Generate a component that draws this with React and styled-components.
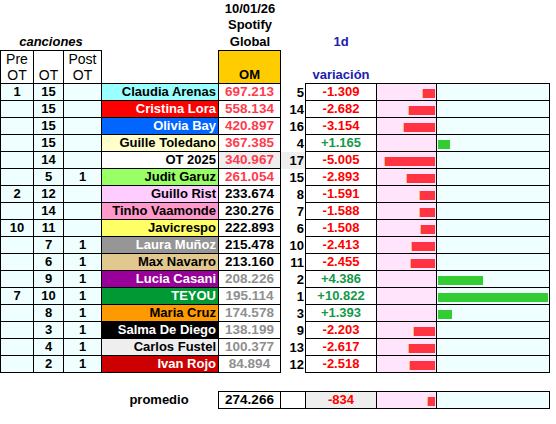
import React from 'react'
import styled, { createGlobalStyle } from 'styled-components'

const COLS = '34px 30px 38px 117px 62px 24px 72px 60px 113px'
const line = '1px solid #000'
const SCALE = 10.15 / 1000

const Global = createGlobalStyle`
  body {
    margin: 0;
    background: #fff;
  }
  * {
    box-sizing: border-box;
  }
`

const Sheet = styled.div`
  width: 556px;
  height: 424px;
  font-family: "Liberation Sans", Arial, sans-serif;
  font-weight: bold;
  font-size: 13px;
  color: #000;
`

const Row = styled.div`
  display: grid;
  grid-template-columns: ${COLS};
  height: ${p => p.$h}px;
  margin-top: ${p => p.$mt || 0}px;
`

const Cell = styled.div`
  display: flex;
  align-items: center;
  justify-content: ${p => p.$align || 'center'};
  background: ${p => p.$bg || 'transparent'};
  color: ${p => p.$color || '#000'};
  border-top: ${p => (p.$t ? line : 'none')};
  border-right: ${p => (p.$r ? line : 'none')};
  border-bottom: ${p => (p.$b ? line : 'none')};
  border-left: ${p => (p.$l ? line : 'none')};
  line-height: 16px;
  white-space: nowrap;
  overflow: hidden;
`

const Caption = styled.div`
  grid-column: ${p => p.$col};
  align-self: end;
  text-align: center;
  line-height: 16.5px;
  font-style: ${p => (p.$italic ? 'italic' : 'normal')};
  color: ${p => p.$color || '#000'};
`

const HeadCell = styled(Cell)`
  flex-direction: column;
  justify-content: flex-end;
  align-items: center;
  text-align: center;
  font-weight: ${p => (p.$plain ? 'normal' : 'bold')};
  font-size: ${p => (p.$plain ? '14px' : '13px')};
`

const NameCell = styled(Cell)`
  padding-right: 2px;
  font-size: 13px;
`

const OmValue = styled(Cell)`
  font-size: 13.5px;
`

const RankCell = styled(Cell)`
  padding-right: 1px;
`

const BarCell = styled(Cell)`
  align-items: flex-start;
  padding-top: 5px;
  padding-${p => (p.$neg ? 'right' : 'left')}: 1px;
`

const Bar = styled.div`
  height: 9px;
  background: ${p => (p.$neg ? '#ff3342' : '#33cc33')};
  box-shadow: ${p => (p.$neg ? 'inset 1px 0 #f4c06a' : 'none')};
`

const CYAN = '#efffff'
const PINK = '#ffe4fb'
const GREY = '#eeeeee'
const RED = '#ff0000'
const GREEN = '#14994a'
const OM_COLORS = { hot: '#ff3b4e', dark: '#000', faded: '#8f8f8f' }

const data = [
  { pre: '1', ot: '15', post: '', name: 'Claudia Arenas', bg: '#99ffff', fg: '#000', om: '697.213', tone: 'hot', rank: 5, v: -1309 },
  { pre: '', ot: '15', post: '', name: 'Cristina Lora', bg: '#ff0000', fg: '#fff', om: '558.134', tone: 'hot', rank: 14, v: -2682 },
  { pre: '', ot: '15', post: '', name: 'Olivia Bay', bg: '#0066ff', fg: '#fff', om: '420.897', tone: 'hot', rank: 16, v: -3154 },
  { pre: '', ot: '15', post: '', name: 'Guille Toledano', bg: '#ffffcc', fg: '#000', om: '367.385', tone: 'hot', rank: 4, v: 1165 },
  { pre: '', ot: '14', post: '', name: 'OT 2025', bg: '#ffffff', fg: '#000', om: '340.967', tone: 'hot', rank: 17, v: -5005, shade: true },
  { pre: '', ot: '5', post: '1', name: 'Judit Garuz', bg: '#99ff66', fg: '#000', om: '261.054', tone: 'hot', rank: 15, v: -2893 },
  { pre: '2', ot: '12', post: '', name: 'Guillo Rist', bg: '#ffccff', fg: '#000', om: '233.674', tone: 'dark', rank: 8, v: -1591 },
  { pre: '', ot: '14', post: '', name: 'Tinho Vaamonde', bg: '#ff99cc', fg: '#000', om: '230.276', tone: 'dark', rank: 7, v: -1588 },
  { pre: '10', ot: '11', post: '', name: 'Javicrespo', bg: '#ffff66', fg: '#000', om: '222.893', tone: 'dark', rank: 6, v: -1508 },
  { pre: '', ot: '7', post: '1', name: 'Laura Muñoz', bg: '#969696', fg: '#fff', om: '215.478', tone: 'dark', rank: 10, v: -2413 },
  { pre: '', ot: '6', post: '1', name: 'Max Navarro', bg: '#e0c88e', fg: '#000', om: '213.160', tone: 'dark', rank: 11, v: -2455 },
  { pre: '', ot: '9', post: '1', name: 'Lucia Casani', bg: '#990099', fg: '#fff', om: '208.226', tone: 'faded', rank: 2, v: 4386 },
  { pre: '7', ot: '10', post: '1', name: 'TEYOU', bg: '#009933', fg: '#fff', om: '195.114', tone: 'faded', rank: 1, v: 10822 },
  { pre: '', ot: '8', post: '1', name: 'Maria Cruz', bg: '#ff9900', fg: '#000', om: '174.578', tone: 'faded', rank: 3, v: 1393 },
  { pre: '', ot: '3', post: '1', name: 'Salma De Diego', bg: '#000000', fg: '#fff', om: '138.199', tone: 'faded', rank: 9, v: -2203 },
  { pre: '', ot: '4', post: '1', name: 'Carlos Fustel', bg: '#eeeeee', fg: '#000', om: '100.377', tone: 'faded', rank: 13, v: -2617 },
  { pre: '', ot: '2', post: '1', name: 'Ivan Rojo', bg: '#cc0000', fg: '#fff', om: '84.894', tone: 'faded', rank: 12, v: -2518 },
]

const fmt = v => {
  const abs = Math.abs(v)
  const s = abs >= 1000 ? `${Math.floor(abs / 1000)}.${String(abs % 1000).padStart(3, '0')}` : String(abs)
  return (v < 0 ? '-' : '+') + s
}

const Bars = ({ v, tight }) => (
  <>
    <BarCell $neg $align="flex-end" $bg={PINK} $r $b $t={tight}>
      {v < 0 && <Bar $neg style={{ width: Math.round(-v * SCALE) }} />}
    </BarCell>
    <BarCell $align="flex-start" $bg={CYAN} $r $b $t={tight}>
      {v > 0 && <Bar style={{ width: Math.round(v * SCALE) }} />}
    </BarCell>
  </>
)

const App = () => {
  return (
    <Sheet>
      <Global />
      <Row $h={50}>
        <Caption $col="1 / 4" $italic>canciones</Caption>
        <Caption $col="5">10/01/26<br />Spotify<br />Global</Caption>
        <Caption $col="7" $color="#2020b0">1d</Caption>
      </Row>

      <Row $h={34}>
        <HeadCell $plain $t $r $b $l>Pre<span>OT</span></HeadCell>
        <HeadCell $plain $t $r $b>OT</HeadCell>
        <HeadCell $plain $t $r $b>Post<span>OT</span></HeadCell>
        <Cell $r $b />
        <HeadCell $t $r $b $bg="#ffcc00">OM</HeadCell>
        <Cell />
        <HeadCell $b $color="#2020b0">variación</HeadCell>
        <Cell $b />
        <Cell $b />
      </Row>

      {data.map(d => (
        <Row $h={17} key={d.name}>
          <Cell $l $r $b $bg={CYAN}>{d.pre}</Cell>
          <Cell $r $b $bg={CYAN}>{d.ot}</Cell>
          <Cell $r $b $bg={CYAN}>{d.post}</Cell>
          <NameCell $align="flex-end" $r $b $bg={d.bg} $color={d.fg}>{d.name}</NameCell>
          <OmValue $r $b $bg={d.shade ? GREY : '#fff'} $color={OM_COLORS[d.tone]}>{d.om}</OmValue>
          <RankCell $align="flex-end" $bg={d.shade ? GREY : '#fff'}>{d.rank}</RankCell>
          <Cell $l $r $b $color={d.v < 0 ? RED : GREEN}>{fmt(d.v)}</Cell>
          <Bars v={d.v} />
        </Row>
      ))}

      <Row $h={18} $mt={18}>
        <Cell />
        <Cell />
        <Cell />
        <NameCell $r>promedio</NameCell>
        <OmValue $t $r $b>274.266</OmValue>
        <Cell $t $b />
        <Cell $l $t $r $b $bg={GREY} $color={RED}>{fmt(-834)}</Cell>
        <Bars v={-834} tight />
      </Row>
    </Sheet>
  )
}

export default App
